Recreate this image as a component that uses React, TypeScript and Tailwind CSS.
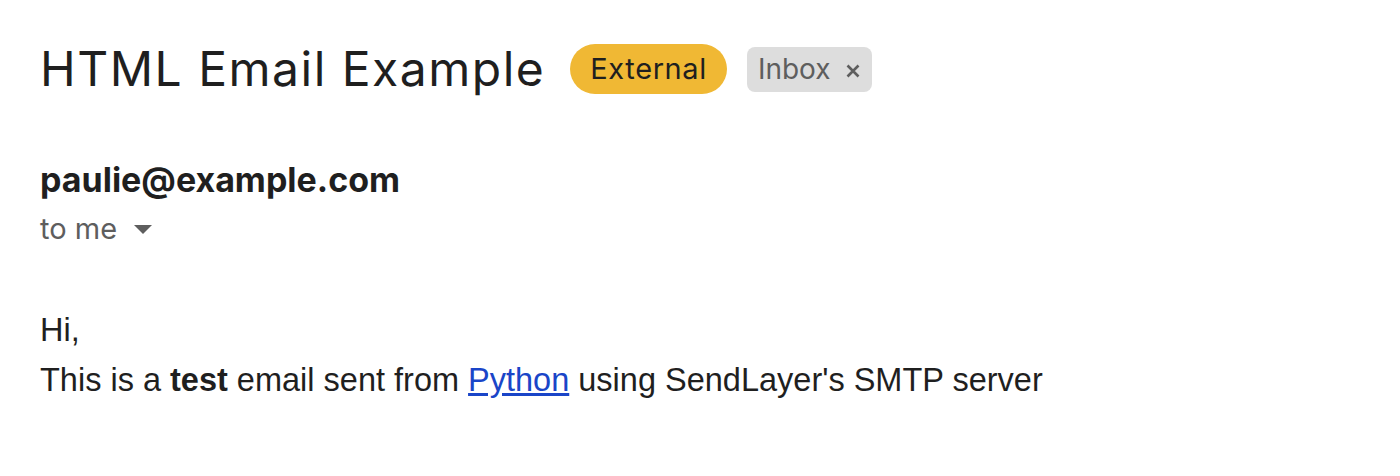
import React from "react";

const gs = { fontFamily: 'Inter, "Open Sans", sans-serif' };

export default function App() {
  return (
    <div className="w-[1400px] h-[476px] bg-white overflow-hidden">
      <div className="pl-[40px] pt-[39px]">
        <div className="flex items-center h-[60px]">
          <h1 className="text-[48px] leading-[60px] text-[#1f1f1f] font-normal tracking-[1.5px]" style={gs}>
            HTML Email Example
          </h1>
          <span
            className="ml-[25px] h-[50px] px-[20px] flex items-center rounded-full bg-[#f0b834] text-[#1f1f1f] text-[29px] tracking-[0.6px]"
            style={gs}
          >
            External
          </span>
          <span
            className="ml-[20px] h-[45px] pl-[11px] pr-[12px] flex items-center gap-[15px] rounded-[8px] bg-[#dddddd] text-[#5e5e5e] text-[28px]"
            style={gs}
          >
            Inbox
            <svg width="14" height="14" viewBox="0 0 14 14" className="mt-[3px]">
              <path d="M1.5 1.5 L12.5 12.5 M12.5 1.5 L1.5 12.5" stroke="#5e5e5e" strokeWidth="2.6" />
            </svg>
          </span>
        </div>
        <div className="mt-[61px] text-[34px] leading-[40px] font-bold text-[#1f1f1f]" style={gs}>
          paulie@example.com
        </div>
        <div className="mt-[11px] flex items-center text-[29px] leading-[36px] text-[#5e5e5e]" style={gs}>
          to me
          <svg width="18" height="10" viewBox="0 0 18 10" className="ml-[17px] mt-[2px]">
            <path d="M0 0 L18 0 L9 9 Z" fill="#5e5e5e" />
          </svg>
        </div>
        <div
          className="mt-[58px] text-[32.5px] leading-[50px] text-[#1f1f1f]"
          style={{ fontFamily: '"Liberation Sans", Arial, sans-serif' }}
        >
          <div>Hi,</div>
          <div>
            This is a <b>test</b> email sent from{" "}
            <a href="#" className="text-[#1a45c8] underline">Python</a> using SendLayer's SMTP server
          </div>
        </div>
      </div>
    </div>
  );
}
